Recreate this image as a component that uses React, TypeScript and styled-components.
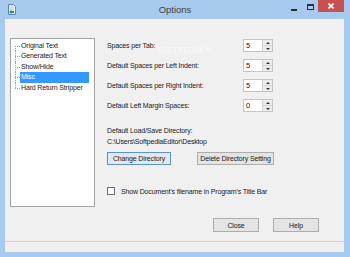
import React from 'react';
import styled, { createGlobalStyle } from 'styled-components';

const GlobalStyle = createGlobalStyle`
  html, body {
    margin: 0;
    padding: 0;
  }
  body {
    width: 350px;
    height: 257px;
    overflow: hidden;
    background: #a9caef;
    font-family: 'Liberation Sans', Arial, sans-serif;
    font-size: 7px;
    letter-spacing: -0.15px;
    color: #1a1a1a;
  }
`;

const Window = styled.div`
  position: relative;
  width: 350px;
  height: 257px;
  box-sizing: border-box;
  padding: 0 6px 5px 5px;
  background: #a9caef;
  display: flex;
  flex-direction: column;
`;

const TitleBar = styled.div`
  height: 19px;
  margin: 0 -6px 0 -5px;
  display: grid;
  grid-template-columns: 1fr auto 1fr;
  align-items: start;
`;

const TitleIcon = styled.div`
  padding: 4px 0 0 8px;
  height: 11px;
`;

const TitleText = styled.div`
  font-size: 9.5px;
  letter-spacing: 0;
  color: #3f3f3f;
  line-height: 19px;
`;

const Controls = styled.div`
  justify-self: end;
  display: flex;
  padding-right: 6px;
`;

const ControlSlot = styled.div<{ $close?: boolean }>`
  width: ${(p) => (p.$close ? '26px' : '16px')};
  height: 12px;
  display: flex;
  justify-content: center;
  align-items: ${(p) => (p.$close ? 'center' : 'flex-start')};
  background: ${(p) => (p.$close ? '#c75050' : 'transparent')};
`;

const MinGlyph = styled.div`
  width: 6px;
  height: 2px;
  margin-top: 9px;
  background: #2d2d2d;
`;

const MaxGlyph = styled.div`
  width: 7px;
  height: 6px;
  margin-top: 4px;
  box-sizing: border-box;
  border: 1px solid #2d2d2d;
  border-top-width: 2px;
`;

const Client = styled.div`
  flex: 1;
  background: #f0f0f0;
  display: flex;
  flex-direction: column;
`;

const Main = styled.div`
  display: flex;
  padding: 19px 0 0 5px;
`;

const Tree = styled.ul`
  list-style: none;
  margin: 0;
  width: 85px;
  height: 169px;
  box-sizing: border-box;
  border: 1px solid #a3a3a3;
  background: #fff;
  padding: 1.5px 0 0 0;
`;

const TreeItem = styled.li<{ $first?: boolean; $last?: boolean }>`
  position: relative;
  height: 10.5px;
  padding-left: 9px;
  &::before {
    content: '';
    position: absolute;
    left: 4px;
    top: 50%;
    width: 5px;
    border-top: 1px dotted #a0a0a0;
  }
  &::after {
    content: '';
    position: absolute;
    left: 4px;
    top: ${(p) => (p.$first ? '50%' : '0')};
    bottom: ${(p) => (p.$last ? '50%' : '0')};
    border-left: 1px dotted #a0a0a0;
  }
`;

const TreeLabel = styled.span<{ $selected?: boolean }>`
  display: inline-block;
  box-sizing: border-box;
  line-height: 10.5px;
  padding: 0 1px;
  width: ${(p) => (p.$selected ? '69px' : 'auto')};
  background: ${(p) => (p.$selected ? '#3399ff' : 'transparent')};
  color: ${(p) => (p.$selected ? '#fff' : '#1a1a1a')};
`;

const Panel = styled.div`
  margin-left: 12px;
  padding-top: 1px;
  display: flex;
  flex-direction: column;
`;

const SpinGroup = styled.div`
  display: flex;
  flex-direction: column;
  gap: 7px;
`;

const SpinRow = styled.div`
  display: grid;
  grid-template-columns: 136px 30px;
  align-items: center;
  height: 13px;
`;

const SpinBox = styled.div`
  display: flex;
  width: 30px;
  height: 13px;
  box-sizing: border-box;
  border: 1px solid #c4c4c4;
  background: #fff;
`;

const SpinValue = styled.div`
  flex: 1;
  padding-left: 2px;
  line-height: 11px;
  font-size: 7.5px;
`;

const SpinButtons = styled.div`
  width: 9px;
  display: flex;
  flex-direction: column;
  border-left: 1px solid #d6d6d6;
`;

const SpinHalf = styled.div`
  flex: 1;
  display: flex;
  align-items: center;
  justify-content: center;
  background: #ececec;
  & + & {
    border-top: 1px solid #d6d6d6;
  }
`;

const Arrow = styled.div<{ $down?: boolean }>`
  width: 0;
  height: 0;
  border-left: 2px solid transparent;
  border-right: 2px solid transparent;
  ${(p) => (p.$down ? 'border-top: 2px solid #333;' : 'border-bottom: 2px solid #333;')}
`;

const TextLine = styled.div<{ $gap?: number }>`
  line-height: 10px;
  margin-top: ${(p) => p.$gap ?? 0}px;
  white-space: nowrap;
`;

const ButtonRow = styled.div`
  display: flex;
  gap: 26px;
  margin-top: 5px;
`;

const Button = styled.div<{ $width: number; $height?: number; $focused?: boolean }>`
  width: ${(p) => p.$width}px;
  height: ${(p) => p.$height ?? 13}px;
  box-sizing: border-box;
  border: 1px solid ${(p) => (p.$focused ? '#5c93c9' : '#adadad')};
  background: ${(p) => (p.$focused ? '#e3e8ed' : '#e4e4e4')};
  display: flex;
  align-items: center;
  justify-content: center;
  white-space: nowrap;
`;

const CheckRow = styled.div`
  display: flex;
  align-items: center;
  gap: 6px;
  height: 10px;
  margin-top: 21px;
`;

const CheckBox = styled.div`
  width: 8px;
  height: 8px;
  box-sizing: border-box;
  border: 1px solid #6f6f6f;
  background: #fff;
`;

const Footer = styled.div`
  display: flex;
  justify-content: flex-end;
  gap: 14px;
  padding-right: 25px;
  margin-top: 11px;
`;

const StatusBar = styled.div`
  margin-top: auto;
  height: 11px;
  box-sizing: border-box;
  border-top: 1px solid #d2d2d2;
  background: #f0f0f0;
`;

const Watermark = styled.div`
  position: absolute;
  left: 157px;
  top: 46px;
  font-family: 'Liberation Serif', serif;
  font-size: 8px;
  letter-spacing: 0.4px;
  color: rgba(255, 255, 255, 0.8);
  pointer-events: none;
`;

const treeItems = ['Original Text', 'Generated Text', 'Show/Hide', 'Misc', 'Hard Return Stripper'];

const spinRows = [
  { label: 'Spaces per Tab:', value: '5' },
  { label: 'Default Spaces per Left Indent:', value: '5' },
  { label: 'Default Spaces per Right Indent:', value: '5' },
  { label: 'Default Left Margin Spaces:', value: '0' },
];

const Spinner = ({ value }: { value: string }) => (
  <SpinBox>
    <SpinValue>{value}</SpinValue>
    <SpinButtons>
      <SpinHalf>
        <Arrow />
      </SpinHalf>
      <SpinHalf>
        <Arrow $down />
      </SpinHalf>
    </SpinButtons>
  </SpinBox>
);

const AppIcon = () => (
  <svg width="8" height="11" viewBox="0 0 8 11">
    <path d="M0.5 0.5 H5.5 L7.5 2.5 V10.5 H0.5 Z" fill="#eef5fc" stroke="#5a86bd" />
    <path d="M1.5 3 H6 M1.5 5 H6" stroke="#9db8da" strokeWidth="0.8" />
    <path d="M1 8 L3.5 5.8 V7 H6 V9 H3.5 V10.2 Z" fill="#2f9a3a" />
  </svg>
);

export default function App() {
  return (
    <Window>
      <GlobalStyle />
      <TitleBar>
        <TitleIcon>
          <AppIcon />
        </TitleIcon>
        <TitleText>Options</TitleText>
        <Controls>
          <ControlSlot>
            <MinGlyph />
          </ControlSlot>
          <ControlSlot>
            <MaxGlyph />
          </ControlSlot>
          <ControlSlot $close>
            <svg width="6" height="6" viewBox="0 0 6 6">
              <path d="M0.5 0.5 L5.5 5.5 M5.5 0.5 L0.5 5.5" stroke="#fff" strokeWidth="1.6" />
            </svg>
          </ControlSlot>
        </Controls>
      </TitleBar>
      <Client>
        <Main>
          <Tree>
            {treeItems.map((item, i) => (
              <TreeItem key={item} $first={i === 0} $last={i === treeItems.length - 1}>
                <TreeLabel $selected={item === 'Misc'}>{item}</TreeLabel>
              </TreeItem>
            ))}
          </Tree>
          <Panel>
            <SpinGroup>
              {spinRows.map((row) => (
                <SpinRow key={row.label}>
                  <span>{row.label}</span>
                  <Spinner value={row.value} />
                </SpinRow>
              ))}
            </SpinGroup>
            <TextLine $gap={14}>Default Load/Save Directory:</TextLine>
            <TextLine $gap={1}>C:\Users\SoftpediaEditor\Desktop</TextLine>
            <ButtonRow>
              <Button $width={64} $focused>Change Directory</Button>
              <Button $width={77}>Delete Directory Setting</Button>
            </ButtonRow>
            <CheckRow>
              <CheckBox />
              <span>Show Document's filename in Program's Title Bar</span>
            </CheckRow>
          </Panel>
        </Main>
        <Footer>
          <Button $width={46} $height={14}>Close</Button>
          <Button $width={46} $height={14}>Help</Button>
        </Footer>
        <StatusBar />
      </Client>
      <Watermark>SOFTPEDIA™</Watermark>
    </Window>
  );
}
